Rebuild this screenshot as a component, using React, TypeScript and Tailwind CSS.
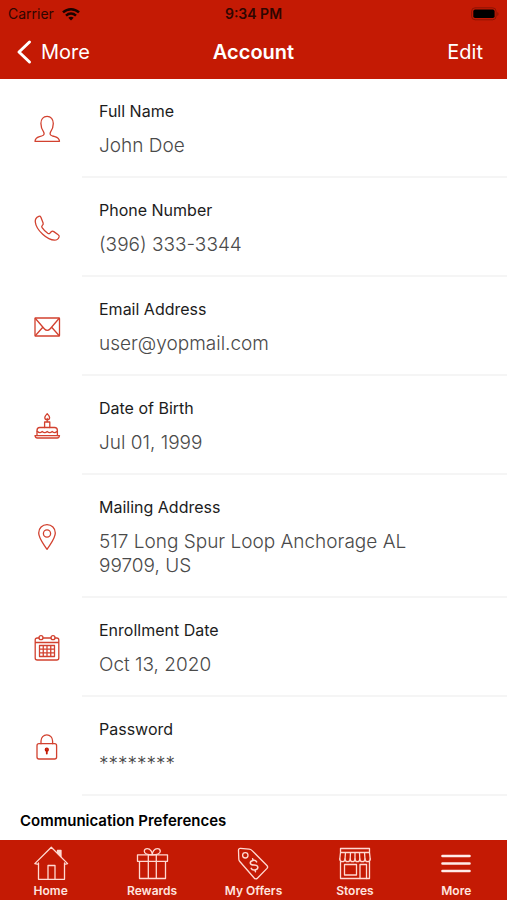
import type { ReactNode } from 'react'

type Field = {
  label: string
  value: ReactNode
  icon: ReactNode
}

type Tab = {
  label: string
  icon: ReactNode
}

/** Outline icons for the account rows, drawn on a 28px grid */
function RowIcon({ children }: { children: ReactNode }) {
  return (
    <svg
      viewBox="0 0 28 28"
      className="h-7 w-7 text-[#d2412f]"
      fill="none"
      stroke="currentColor"
      strokeWidth="1.3"
      strokeLinecap="round"
      strokeLinejoin="round"
      aria-hidden="true"
    >
      {children}
    </svg>
  )
}

/** Outline icons for the tab bar, drawn on a 36px grid */
function TabIcon({ children }: { children: ReactNode }) {
  return (
    <svg
      viewBox="0 0 36 36"
      className="h-9 w-9 text-[#ffd9d2]"
      fill="none"
      stroke="currentColor"
      strokeWidth="1.3"
      strokeLinecap="round"
      strokeLinejoin="round"
      aria-hidden="true"
    >
      {children}
    </svg>
  )
}

const fields: Field[] = [
  {
    label: 'Full Name',
    value: 'John Doe',
    icon: (
      <RowIcon>
        <path d="M2 26.300h24.500c-.2-2.600-1.900-4-4.600-4.700l-2.400-.6c-2.400-.7-2.900-2-2-3.900 1.800-2.400 2.800-5.300 2.800-8.500 0-4.400-2.400-7.200-6.200-7.200s-6.200 2.800-6.200 7.200c0 3.200 1 6.100 2.800 8.500.9 1.900.4 3.200-2 3.900l-2.200.6C3.800 22.300 2.200 23.700 2 26.300z" />
      </RowIcon>
    ),
  },
  {
    label: 'Phone Number',
    value: '(396) 333-3344',
    icon: (
      <RowIcon>
        <path d="M5.800 2.300C3.500 3.200 2 5.400 2.300 8c.4 3.900 3.400 8.600 7.400 12.300 3.900 3.600 8.400 5.900 11.900 5.900 2.100 0 3.800-1.300 4.500-3.300.2-.9-.1-1.700-.9-2.200l-4.400-3.100c-.9-.6-1.900-.5-2.600.2l-1.200 1.300c-.6.7-1.500.7-2.300.2-2.200-1.500-4.100-3.400-5.600-5.600-.5-.8-.5-1.500.1-2.100.9-.8 1.300-1.700.9-2.700L7.900 3.200c-.4-.8-1.200-1.200-2.100-.9z" />
      </RowIcon>
    ),
  },
  {
    label: 'Email Address',
    value: 'user@yopmail.com',
    icon: (
      <RowIcon>
        <rect x="2" y="5" width="24.500" height="18" rx=".6" />
        <path d="M2.400 5.500 11.500 16c1.600 1.800 3.900 1.800 5.500 0L26 5.500M2.500 22.500l7.300-8.200M26 22.500l-7.300-8.200" />
      </RowIcon>
    ),
  },
  {
    label: 'Date of Birth',
    value: 'Jul 01, 1999',
    icon: (
      <RowIcon>
        <path d="M14.200 1.600c1.500 1.600 2.400 2.800 2.400 4s-1 2.200-2.400 2.200-2.400-1-2.400-2.200.9-2.400 2.400-4zM14.200 6.500v3M11.600 15.500V10h5.200v5.500" />
        <path d="M4 23.600v-5.200c0-1.700 1.100-2.900 2.800-2.900h14.800c1.700 0 2.800 1.200 2.800 2.900v5.200" />
        <path d="M4.200 19.300c1.700 1.700 3.300 1.700 5 .2 1.800 1.600 3.300 1.600 5 0 1.700 1.600 3.300 1.600 5 0 1.700 1.500 3.300 1.500 5-.2" />
        <path d="M2 23.600h24.500c-.3 1.600-1 2.400-2.300 2.400H4.300C3 26 2.300 25.200 2 23.600z" />
      </RowIcon>
    ),
  },
  {
    label: 'Mailing Address',
    value: (
      <>
        517 Long Spur Loop Anchorage AL
        <br />
        99709, US
      </>
    ),
    icon: (
      <RowIcon>
        <path d="M14 26.300c-3.400-5.400-8.300-10.700-8.300-16.300C5.700 5.200 9.300 1.700 14 1.700s8.300 3.500 8.300 8.300c0 5.600-4.900 10.900-8.300 16.300z" />
        <circle cx="14" cy="10.500" r="3.600" />
      </RowIcon>
    ),
  },
  {
    label: 'Enrollment Date',
    value: 'Oct 13, 2020',
    icon: (
      <RowIcon>
        <path d="M6 4H4.200C3 4 2.200 4.800 2.200 6v18c0 1.200.8 2 2 2h19.600c1.200 0 2-.8 2-2V6c0-1.200-.8-2-2-2H22M10 4h8M2.200 8.500h23.600" />
        <circle cx="8" cy="3.700" r="2" />
        <circle cx="20" cy="3.700" r="2" />
        <path d="M6.500 11.500h15v11h-15zM10.250 11.500v11M14 11.500v11M17.750 11.500v11M6.500 15.200h15M6.500 18.800h15" />
      </RowIcon>
    ),
  },
  {
    label: 'Password',
    value: '********',
    icon: (
      <RowIcon>
        <rect x="4" y="10.700" width="19.600" height="15.300" rx="2" />
        <path d="M8 10.700V8c0-3.500 2.500-6.200 5.800-6.200s5.800 2.700 5.800 6.200v2.700" />
        <circle cx="13.800" cy="16.700" r="1.500" fill="currentColor" stroke="#c41a04" />
        <path d="M13.800 17.500v3" stroke="#c41a04" strokeWidth="1.800" />
      </RowIcon>
    ),
  },
]

const tabs: Tab[] = [
  {
    label: 'Home',
    icon: (
      <TabIcon>
        <path d="M5.500 34.300h26V18M5.500 34.300V18M1.800 18.600 18.300 2.300l16.300 16.300M1.800 18.600l3.700.8M34.600 18.600l-3.100.8M15 34V20.500h7V34" />
        <path d="M24.500 8V5.300H28v6.200z" fill="currentColor" />
      </TabIcon>
    ),
  },
  {
    label: 'Rewards',
    icon: (
      <TabIcon>
        <path d="M3.500 9.800h30v6.500h-30zM5.500 16.300h26V33.500h-26zM14.300 9.800v23.700M22.300 9.800v23.700" />
        <path d="M18.300 9.800c-3.800 0-8-.8-8-3.500 0-1.800 1.300-2.700 3-2.700 3 0 5 3.200 5 6.200 0-3 2-6.200 5-6.200 1.700 0 3 .9 3 2.700 0 2.700-4.200 3.500-8 3.500z" />
      </TabIcon>
    ),
  },
  {
    label: 'My Offers',
    icon: (
      <TabIcon>
        <path d="M5.500 3.400 14 4.200c1.200.1 2.200.5 3.100 1.400l14.800 14.900c.9.900.9 2 .1 2.900L22.400 33.200c-.9.900-2.100.9-3 0L4.800 16.500c-.6-.7-.9-1.400-1-2.300L3.500 5.600c-.1-1.400.7-2.300 2-2.200z" />
        <circle cx="10.300" cy="10.300" r="2.700" />
        <g transform="rotate(-12 19 20)">
          <path d="M22.200 17.500c-.4-1.400-1.600-2.200-3.200-2.200-1.900 0-3.200.9-3.200 2.300 0 3.400 6.500 1.600 6.500 5 0 1.500-1.400 2.400-3.300 2.400s-3.100-.8-3.400-2.300M19 13.500v1.800M19 25v1.800" strokeWidth="1.500" />
        </g>
      </TabIcon>
    ),
  },
  {
    label: 'Stores',
    icon: (
      <TabIcon>
        <path d="M3.500 3.500h29v4h-29zM3.500 7.500 2.800 14M32.500 7.500l.7 6.500M8.500 7.500 8 14M13.500 7.500 13.200 14M18 7.500V14M22.500 7.500l.3 6.500M27.500 7.500l.5 6.500" />
        <path d="M2.800 14c0 3.600 5.200 3.600 5.200 0 0 3.600 5.200 3.600 5.200 0 0 3.600 4.800 3.600 4.800 0 0 3.600 4.800 3.600 4.800 0 0 3.600 5.200 3.600 5.200 0 0 3.600 5.200 3.600 5.200 0M3.500 16.800V33.500h29V16.800" />
        <path d="M7.500 19.500h12V30h-12zM23 33.500v-14h6.500v14" />
      </TabIcon>
    ),
  },
  {
    label: 'More',
    icon: (
      <TabIcon>
        <path d="M4.500 11h27M4.500 18.500h27M4.500 26h27" stroke="#ffece9" strokeWidth="2.600" />
      </TabIcon>
    ),
  },
]

function StatusBar() {
  return (
    <div className="grid h-7 grid-cols-3 items-center px-2 text-sm text-[#2f0601]">
      <div className="flex items-center gap-2">
        <span>Carrier</span>
        <svg viewBox="0 0 18 14" className="h-[14px] w-[18px]" aria-hidden="true">
          <g fill="none" stroke="#1a0300" strokeWidth="2.500">
            <path d="M1 5.400c4.600-4.300 11.400-4.300 16 0" />
            <path d="M4 8.600c3-2.700 7-2.700 10 0" />
          </g>
          <path d="M9 13.500 6.300 10.800c1.600-1.400 3.800-1.400 5.400 0z" fill="#1a0300" />
        </svg>
      </div>
      <span className="text-center font-semibold">9:34 PM</span>
      <svg viewBox="0 0 29 14" className="h-[14px] w-[29px] justify-self-end" aria-hidden="true">
        <rect x="1.600" y=".8" width="24.500" height="12" rx="3.500" fill="none" stroke="#8c1405" />
        <rect x="3.300" y="2.600" width="21.300" height="8.400" rx="1.800" fill="#000" />
        <path d="M27.300 5v4c1.600-.7 1.600-3.300 0-4z" fill="#8c1405" />
      </svg>
    </div>
  )
}

function FieldRow({ label, value, icon }: Field) {
  return (
    <div className="flex">
      <div className="flex w-[82px] shrink-0 items-center pl-[33px]">{icon}</div>
      <dl className="flex-1 border-b-2 border-[#f5f5f5] pt-[22px] pb-[18px] pl-[17px]">
        <dt className="text-base leading-5 text-[#1c1c1c]">{label}</dt>
        <dd className="mt-[13px] text-[19px] leading-6 font-light text-[#4a4a4a]">{value}</dd>
      </dl>
    </div>
  )
}

export default function App() {
  return (
    <div className="flex h-dvh flex-col bg-white font-['Inter','Liberation_Sans',sans-serif]">
      <header className="bg-[#c41a04]">
        <StatusBar />
        <nav className="grid grid-cols-3 items-center px-4 pt-[10px] pb-[13px] text-xl leading-7 text-white">
          <button type="button" className="flex items-center gap-2 justify-self-start">
            <svg viewBox="0 0 17 26" className="h-[26px] w-[17px]" aria-hidden="true">
              <path
                d="M13.500 3 3 13l10.500 10"
                fill="none"
                stroke="currentColor"
                strokeWidth="3"
                strokeLinecap="round"
                strokeLinejoin="round"
              />
            </svg>
            More
          </button>
          <h1 className="text-center font-semibold">Account</h1>
          <button type="button" className="mr-2 justify-self-end">
            Edit
          </button>
        </nav>
      </header>

      <main className="flex-1 overflow-y-auto">
        {fields.map((field) => (
          <FieldRow key={field.label} {...field} />
        ))}
        <h2 className="px-5 pt-[15px] text-[15px] leading-5 font-semibold text-black">
          Communication Preferences
        </h2>
      </main>

      {/* Bottom tab bar */}
      <nav className="grid grid-cols-5 bg-[#c41a04] pt-[5px] pb-px">
        {tabs.map((tab) => (
          <a
            key={tab.label}
            href={`#${tab.label.toLowerCase().replace(' ', '-')}`}
            className="flex flex-col items-center gap-[2px] text-xs leading-4 font-semibold text-[#ffe4df]"
          >
            {tab.icon}
            {tab.label}
          </a>
        ))}
      </nav>
    </div>
  )
}
